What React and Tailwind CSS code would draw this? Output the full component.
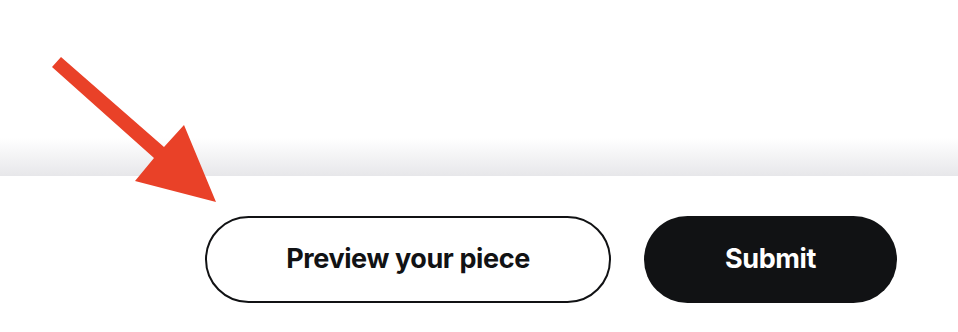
export default function App() {
  return (
    <div className="relative w-[958px] h-[332px] bg-white overflow-hidden" style={{ fontFamily: 'Inter, "Noto Sans", sans-serif' }}>
      {/* scroll area fade */}
      <div className="h-[176px] flex flex-col justify-end">
        <div className="h-[38px] bg-gradient-to-b from-white to-[#e7e7ea]" />
      </div>

      {/* footer actions */}
      <div className="flex justify-end gap-[33px] pr-[61px] pt-[40px]">
        <button className="w-[406px] h-[87px] rounded-full border-2 border-[#111214] bg-white text-[#111214] text-[27px] font-bold tracking-[-0.015em]">
          Preview your piece
        </button>
        <button className="w-[253px] h-[87px] rounded-full bg-[#111214] text-white text-[27px] font-bold tracking-[-0.015em]">
          Submit
        </button>
      </div>

      {/* annotation arrow */}
      <svg className="absolute left-0 top-0 pointer-events-none" width="958" height="332" viewBox="0 0 958 332">
        <polygon
          fill="#e94128"
          points="61,57 164,147 184,125 216,202 135,181 154,158 52,67"
        />
      </svg>
    </div>
  )
}
